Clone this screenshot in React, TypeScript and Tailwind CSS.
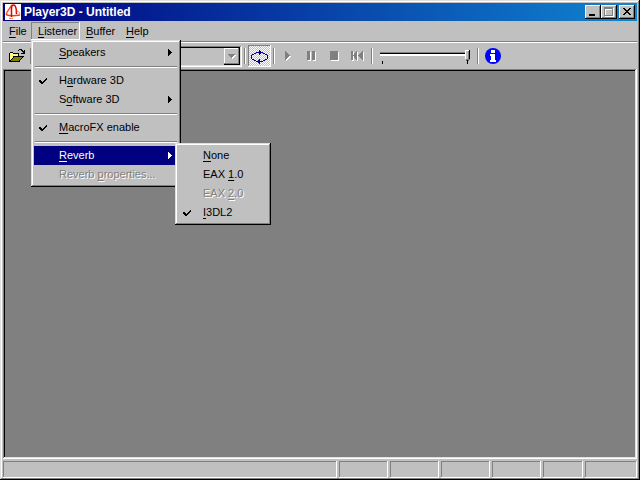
import type { ReactNode } from "react"

const popup = "bg-[#c0c0c0] p-[3px] shadow-[inset_-1px_-1px_0_#000,inset_1px_1px_0_#dfdfdf,inset_-2px_-2px_0_#808080,inset_2px_2px_0_#fff]"
const sunken = "shadow-[inset_-1px_-1px_0_#fff,inset_1px_1px_0_#808080]"

/* "&" stands before the letter that is underlined */
function Label({ text }: { text: string }) {
    const [before, after] = text.split("&")
    return (
        <span className="whitespace-nowrap">
            {before}<u className="underline underline-offset-2">{after[0]}</u>{after.slice(1)}
        </span>
    )
}

type ItemProps = { text: string; checked?: boolean; arrow?: boolean; active?: boolean; disabled?: boolean; children?: ReactNode }

function Item({ text, checked, arrow, active, disabled, children }: ItemProps) {
    return (
        <li className="relative" role="none">
            <button
                role="menuitem"
                disabled={disabled}
                className={`flex h-[19px] w-full items-center pr-1 text-left ${active ? "bg-[#000080] text-white" : ""} ${disabled ? "text-[#808080] [text-shadow:1px_1px_0_#fff]" : ""}`}
            >
                <span className="flex w-[25px] shrink-0 pl-[5px]">
                    {checked && (
                        <svg width="8" height="8" shapeRendering="crispEdges">
                            <path d="M0 3h2v1h1v1h1V4h1V3h1V2h1V1h1v2h-1v1h-1v1h-1v1h-1v1h-2v-1h-1v-1h-1z" fill="currentColor" />
                        </svg>
                    )}
                </span>
                <Label text={text} />
                {arrow && (
                    <svg width="4" height="7" className="mr-0.5 ml-auto" shapeRendering="crispEdges">
                        <path d="M0 0h1v1h1v1h1v1h1v1h-1v1h-1v1h-1v1h-1z" fill="currentColor" />
                    </svg>
                )}
            </button>
            {children}
        </li>
    )
}

function Divider() {
    return (
        <li role="separator" className="flex h-[9px] items-center px-px">
            <hr className="h-0.5 w-full border-t border-b border-t-[#808080] border-b-white" />
        </li>
    )
}

function ListenerMenu() {
    return (
        <ul role="menu" aria-label="Listener" className={`absolute top-[18px] left-0 z-10 w-[150px] ${popup}`}>
            <Item text="&Speakers" arrow />
            <Divider />
            <Item text="H&ardware 3D" checked />
            <Item text="S&oftware 3D" arrow />
            <Divider />
            <Item text="&MacroFX enable" checked />
            <Divider />
            <Item text="&Reverb" arrow active>
                <ul role="menu" aria-label="Reverb" className={`absolute -top-[3px] left-[141px] w-24 text-black ${popup}`}>
                    <Item text="&None" />
                    <Item text="EAX &1.0" />
                    <Item text="EAX &2.0" disabled />
                    <Item text="&I3DL2" checked />
                </ul>
            </Item>
            <Item text="Reverb &properties..." disabled />
        </ul>
    )
}

function WindowButton({ label, children }: { label: string; children: ReactNode }) {
    return (
        <button
            aria-label={label}
            className="h-3.5 w-4 bg-[#c0c0c0] shadow-[inset_-1px_-1px_0_#000,inset_1px_1px_0_#fff,inset_-2px_-2px_0_#808080]"
        >
            <svg width="16" height="14" shapeRendering="crispEdges">{children}</svg>
        </button>
    )
}

function TitleBar() {
    return (
        <header className="flex h-[18px] items-center bg-linear-to-r/srgb from-[#000080] to-[#1084d0] px-0.5 text-white">
            <svg width="16" height="16" className="shrink-0">
                <path d="M0 0h16v16H0z" fill="#fff" />
                <g fill="none">
                    <path d="M7 1C5 4 2 7 1 10.500" stroke="#f06030" strokeWidth="1.5" />
                    <path d="M1 10.500c3 1.500 9 1.500 14 .5" stroke="#f04010" strokeWidth="1.500" />
                    <path d="M6.500 13V4c0-2 1-3 2-3 2 0 3 3 3 9" stroke="#e00000" strokeWidth="1.500" />
                    <path d="M11.500 7c2 0 3 1 3.500 3.500M4 14.500h4" stroke="#ff8050" />
                </g>
            </svg>
            <h1 className="ml-[3px] flex-1 text-xs font-bold whitespace-nowrap">Player3D - Untitled</h1>
            <WindowButton label="Minimize">
                <path d="M4 9h6v2H4z" />
            </WindowButton>
            <WindowButton label="Maximize">
                <path d="M4 3h9v9H4z" fill="#fff" />
                <path d="M3 2h9v9H3z" fill="#808080" />
                <path d="M4 4h7v6H4z" fill="#c0c0c0" />
                <path d="M4 4h7v1H5v5H4z" fill="#fff" />
            </WindowButton>
            <span className="w-0.5" />
            <WindowButton label="Close">
                <path d="M4 3h2v1h1v1h2V4h1V3h2v1h-1v1h-1v1H9v1h1v1h1v1h1v1h-2V9H9V8H7v1H6v1H4V9h1V8h1V7h1V6H6V5H5V4H4z" />
            </WindowButton>
        </header>
    )
}

function MenuBar() {
    return (
        <nav className="flex h-5 items-center text-[11px]">
            <button className="h-[18px] w-7 pl-1.5 text-left"><Label text="&File" /></button>
            <div className="relative h-[18px]">
                <button aria-expanded="true" className={`h-[18px] w-[49px] pt-px pl-[7px] text-left ${sunken}`}>
                    <Label text="&Listener" />
                </button>
                <ListenerMenu />
            </div>
            <button className="h-[18px] w-10 pl-1.5 text-left"><Label text="&Buffer" /></button>
            <button className="h-[18px] px-1.5"><Label text="&Help" /></button>
        </nav>
    )
}

function ToolButton({ label, pressed, children }: { label: string; pressed?: boolean; children: ReactNode }) {
    return (
        <button
            aria-label={label}
            aria-pressed={pressed}
            className={`flex h-[22px] w-[23px] shrink-0 items-center justify-center ${pressed ? `bg-[conic-gradient(#fff_25%,#c0c0c0_25%_50%,#fff_50%_75%,#c0c0c0_75%)] bg-size-[2px_2px] ${sunken}` : ""}`}
        >
            {children}
        </button>
    )
}

/* greyed glyph with the white edge at its lower right */
function DimIcon({ d }: { d: string }) {
    return (
        <svg width="15" height="12" shapeRendering="crispEdges">
            <path d={d} fill="#fff" transform="translate(1 1)" />
            <path d={d} fill="#808080" />
        </svg>
    )
}

function Separator() {
    return <div className="mx-0.5 h-4 w-0.5 shrink-0 border-r border-l border-r-white border-l-[#808080]" />
}

function Toolbar() {
    return (
        <div className="flex h-[26px] items-center pl-0.5">
            <ToolButton label="Open">
                <svg width="16" height="14" shapeRendering="crispEdges">
                    <path d="M0 4h1V3h3v1h6v4h1v5H0z" fill="#000" />
                    <path d="M1 4h3v1h5v3H5v1H4v1H3v1H2v1H1z" fill="#ffff80" />
                    <path d="M4 7h11v1h-1v1h-1v1h-1v1h-1v1h-1v1H0v-1h1v-1h1v-1h1V9h1z" fill="#000" />
                    <path d="M5 8h8v1h-1v1h-1v1h-1v1H2v-1h1v-1h1V9h1z" fill="#808000" />
                    <path d="M9 1h1V0h3v1h1v1h1V1h1v4h-4V4h2V3h-1V2h-1V1h-2v1H9z" fill="#000" />
                </svg>
            </ToolButton>
            <Separator />
            <div className="relative h-[21px] w-52 bg-[#c0c0c0] shadow-[inset_-1px_-1px_0_#fff,inset_1px_1px_0_#808080,inset_-2px_-2px_0_#dfdfdf,inset_2px_2px_0_#000]">
                <select aria-label="Buffer" disabled className="h-full w-full appearance-none bg-transparent" />
                <svg width="16" height="17" className="pointer-events-none absolute top-0.5 right-0.5" shapeRendering="crispEdges">
                    <path d="M0 0h16v17H0z" fill="#000" />
                    <path d="M0 0h15v16H0z" fill="#808080" />
                    <path d="M0 0h14v15H0z" fill="#fff" />
                    <path d="M1 1h13v14H1z" fill="#c0c0c0" />
                    <path d="M5 7h7v1h-1v1h-1v1H9v1H8v-1H7V9H6V8H5z" fill="#fff" />
                    <path d="M4 6h7v1h-1v1H9v1H8v1H7V9H6V8H5V7H4z" fill="#808080" />
                </svg>
            </div>
            <Separator />
            <ToolButton label="Loop" pressed>
                <svg width="17" height="14" className="mt-px" shapeRendering="crispEdges">
                    <path d="M5 2h7v1H5zM3 3h2v1H3zm9 0h2v1h-2zM1 4h2v1H1zm13 0h2v1h-2zM0 5h1v4H0zm16 0h1v4h-1zM1 9h2v1H1zm13 0h2v1h-2zM3 10h2v1H3zm9 0h2v1h-2zM5 11h7v1H5zM8 0h1v5H8zm1 1h1v3H9zM8 9h1v5H8zm-1 1h1v3H7z" fill="#000080" />
                </svg>
            </ToolButton>
            <Separator />
            <ToolButton label="Play"><DimIcon d="M4 1h1v1h1v1h1v1h1v1h1v1h-1v1H7v1H6v1H5v1H4z" /></ToolButton>
            <ToolButton label="Pause"><DimIcon d="M3 1h3v9H3zm5 0h3v9H8z" /></ToolButton>
            <ToolButton label="Stop"><DimIcon d="M3 1h8v9H3z" /></ToolButton>
            <ToolButton label="Rewind"><DimIcon d="M1 1h2v9H1zM7 1v9H6V9H5V8H4V6H3V5h1V3h1V2h1V1zM13 1v9h-1V9h-1V8h-1V7H9V6H8V5h1V4h1V3h1V2h1V1z" /></ToolButton>
            <Separator />
            <div className="flex h-[22px] w-[100px] flex-col px-[5px] pt-1">
                <input
                    type="range"
                    aria-label="Volume"
                    defaultValue={100}
                    className="h-2.5 w-full appearance-none bg-transparent [&::-webkit-slider-runnable-track]:h-1 [&::-webkit-slider-runnable-track]:border-t [&::-webkit-slider-runnable-track]:border-t-[#808080] [&::-webkit-slider-runnable-track]:bg-white [&::-webkit-slider-runnable-track]:shadow-[inset_0_1px_0_#000] [&::-webkit-slider-thumb]:-mt-[3px] [&::-webkit-slider-thumb]:h-[11px] [&::-webkit-slider-thumb]:w-[5px] [&::-webkit-slider-thumb]:appearance-none [&::-webkit-slider-thumb]:bg-[#c0c0c0] [&::-webkit-slider-thumb]:[clip-path:polygon(0_0,100%_0,100%_80%,60%_100%,40%_100%,0_80%)] [&::-webkit-slider-thumb]:shadow-[inset_-1px_-1px_0_#000,inset_1px_1px_0_#fff,inset_-2px_-2px_0_#808080]"
                />
                <div className="mt-0.5 flex justify-between px-0.5">
                    <i className="h-[3px] w-px bg-black" />
                    <i className="h-[3px] w-px bg-black" />
                </div>
            </div>
            <Separator />
            <ToolButton label="About">
                <svg width="16" height="16">
                    <circle cx="8" cy="8" r="8" fill="#0000ff" />
                    <path d="M6 2h4v3H6zM5 6h5v6h1v2H5v-2h1V8H5z" fill="#fff" shapeRendering="crispEdges" />
                </svg>
            </ToolButton>
        </div>
    )
}

function StatusBar() {
    return (
        <footer className="mt-0.5 flex h-[17px] gap-0.5">
            <div className={`flex-1 ${sunken}`} />
            <div className={`w-[49px] ${sunken}`} />
            <div className={`w-[49px] ${sunken}`} />
            <div className={`w-[49px] ${sunken}`} />
            <div className={`w-[49px] ${sunken}`} />
            <div className={`w-10 ${sunken}`} />
            <div className={`w-[52px] ${sunken}`} />
        </footer>
    )
}

export default function App() {
    return (
        <div className="flex h-screen flex-col bg-[#c0c0c0] p-[3px] pb-0.5 font-['Liberation_Sans',sans-serif] text-[11px] text-black shadow-[inset_-1px_-1px_0_#000,inset_1px_1px_0_#dfdfdf,inset_-2px_-2px_0_#808080,inset_2px_2px_0_#fff]">
            <TitleBar />
            <MenuBar />
            <hr className="h-0.5 border-t border-b border-t-[#808080] border-b-white" />
            <Toolbar />
            <main className="flex-1 bg-[#808080] shadow-[inset_-1px_-1px_0_#fff,inset_1px_1px_0_#808080,inset_-2px_-2px_0_#dfdfdf,inset_2px_2px_0_#000]" />
            <StatusBar />
        </div>
    )
}
